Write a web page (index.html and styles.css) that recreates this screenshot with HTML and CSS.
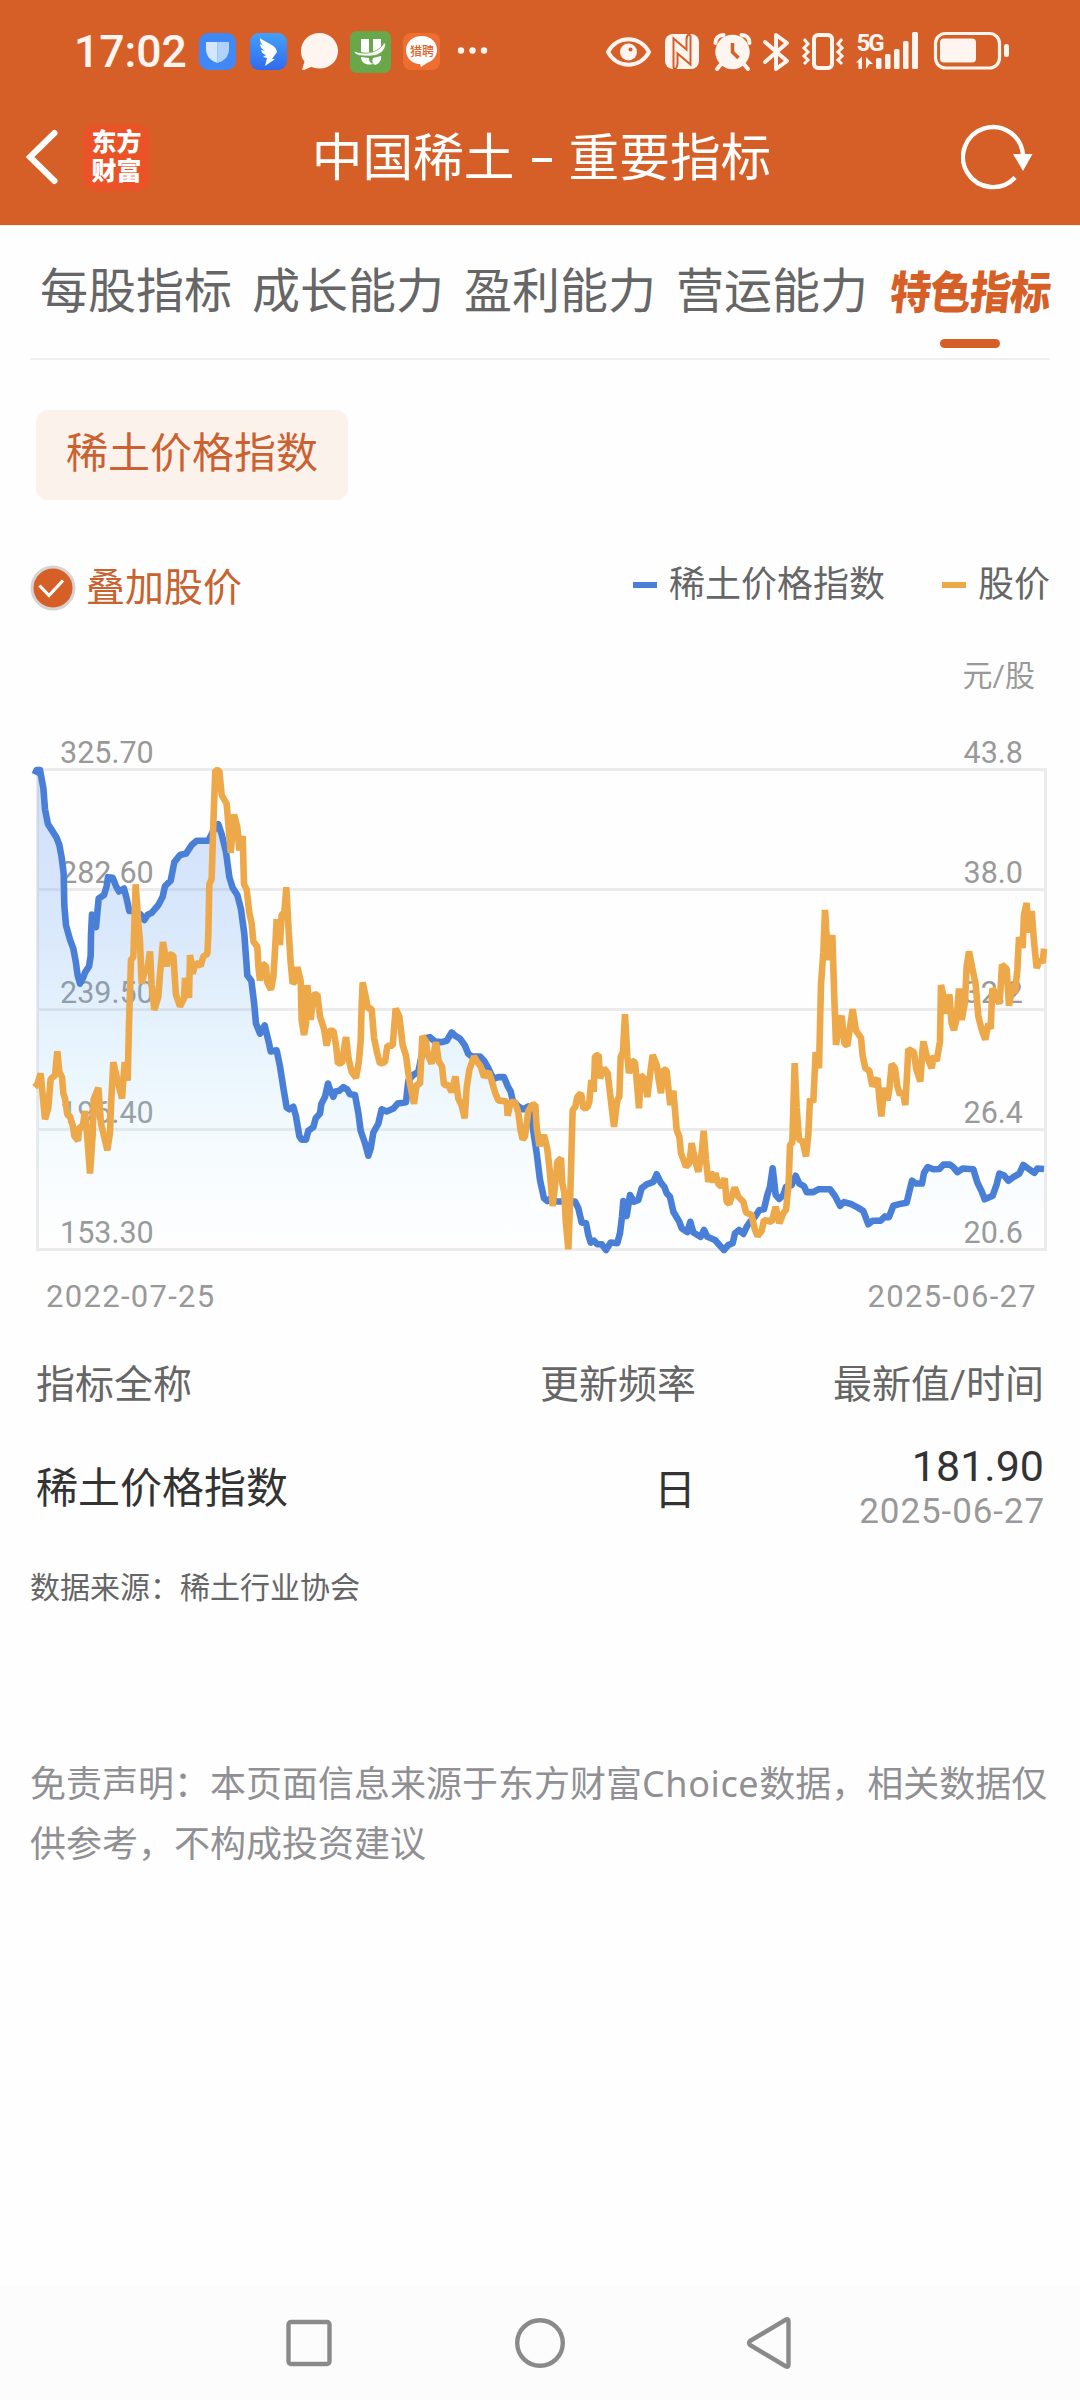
FILE: index.html
```html
<!DOCTYPE html>
<html lang="zh-CN">
<head>
    <meta charset="UTF-8">
    <meta name="viewport" content="width=device-width, initial-scale=1.0">
    <title>中国稀土 - 重要指标</title>
    <link rel="stylesheet" href="styles.css">
</head>
<body>
    <header class="header">
        <div class="status-bar">
            <span class="clock">17:02</span>
            <svg class="notifications" viewBox="199 30 290 44" width="290" height="44">
                <defs>
                    <linearGradient id="wingBg" x1="0" y1="0" x2="0" y2="1">
                        <stop offset="0" stop-color="#45a0f8"/>
                        <stop offset="1" stop-color="#2f6af0"/>
                    </linearGradient>
                </defs>
                <!-- shield -->
                <rect x="199" y="33" width="37" height="37" rx="9" fill="#3f88f5"/>
                <path d="M206 42h11.500v21c-7-2-11.500-7-11.500-14z" fill="#d3e6ff"/>
                <path d="M217.500 42H229v7c0 7-4.500 12-11.500 14z" fill="#b0d2fd"/>
                <!-- wing -->
                <rect x="250" y="33" width="37" height="37" rx="9" fill="url(#wingBg)"/>
                <path d="M260 38c5 4 13 6 16 11l1 3-5 7h3l-10 7 2-8-4-1 3-2c-3-1-4-2-5-5l4 1c-3-2-5-4-5-7l4 2c-3-2-4-4-4-8z" fill="#fff"/>
                <!-- bubble -->
                <path d="M319.500 33c10.500 0 18.500 8 18.500 18s-8 17.500-18.500 17.500c-3.500 0-6-.7-8-1.700L304 70c-1.500.4-2-.5-1.500-2l2-6.500c-2.500-3-3.500-6.500-3.500-10.500 0-10 8-18 18.500-18z" fill="#fef5f0"/>
                <!-- green app -->
                <rect x="350" y="31" width="41" height="42" rx="7" fill="#69a84a"/>
                <path d="M361 39h8v13h4V39h8v12c-6 3-14 3.500-20 1z" fill="#fff"/>
                <path d="M354 51c9 4 24 3 30-8 .5 0 1.500 0 1.500 2-1 8-9 11-16 11-7 0-15 0-15.500-5z" fill="#fff" stroke="#69a84a" stroke-width=".8"/>
                <path d="M361 57l8 1c0 3 1 5 4 6-6 2-12-1-12-7zM373 58l8-2c1 4-2 8-6 9-3-2-3-4-2-7z" fill="#fff"/>
                <!-- recruiting app -->
                <rect x="403" y="33" width="37" height="37" rx="8" fill="#ef6d30"/>
                <path d="M421.500 36c9 0 15.500 6 15.500 14 0 6-4 11-10 13l-6 4-1-3c-8 0-14-6-14-14s7-14 15.500-14z" fill="#fff"/>
                <text class="mini-label" x="410" y="55.500">猎聘</text>
                <circle cx="461" cy="50.500" r="3.200" fill="#fef5f0"/>
                <circle cx="472.500" cy="50.500" r="3.200" fill="#fef5f0"/>
                <circle cx="484" cy="50.500" r="3.200" fill="#fef5f0"/>
            </svg>
            <svg class="system" viewBox="604 30 408 44" width="408" height="44" fill="#fef5f0">
                <!-- eye -->
                <path d="M608 52c9-17 32-17 41 0-9 17-32 17-41 0z" fill="none" stroke="#fef5f0" stroke-width="4" stroke-linejoin="round"/>
                <circle cx="628.500" cy="52" r="8.500"/>
                <circle cx="630.500" cy="49.500" r="2" fill="#d65f28"/>
                <!-- nfc -->
                <rect x="665" y="34" width="34" height="35" rx="8"/>
                <path d="M675 70l-1.500-3V38.500l13 11V39c0-3 1-4 3-6M688 33l2.500 3v28.500l-13-11V64c0 3-1 4-3 6" fill="none" stroke="#d65f28" stroke-width="2"/>
                <!-- alarm -->
                <circle cx="732.500" cy="52" r="17.200"/>
                <path d="M715.500 43c0-5 3-8 8-8M749.500 43c0-5-3-8-8-8M717 69l5-6M748 69l-5-6" fill="none" stroke="#fef5f0" stroke-width="4" stroke-linecap="round"/>
                <path d="M732.500 43v9l6 6" fill="none" stroke="#d65f28" stroke-width="3.500"/>
                <!-- bluetooth -->
                <path d="M765 42l22 19-11 8V35l11 8-22 19" fill="none" stroke="#fef5f0" stroke-width="4" stroke-linejoin="round" stroke-linecap="round"/>
                <!-- vibrate -->
                <rect x="814" y="35" width="18" height="33" rx="4" fill="none" stroke="#fef5f0" stroke-width="4"/>
                <path d="M804 39l4 5-4 4 4 4-4 4 4 4-4 4M842 39l-4 5 4 4-4 4 4 4-4 4 4 4" fill="none" stroke="#fef5f0" stroke-width="3"/>
                <!-- signal -->
                <text class="net" x="856.500" y="50.500">5G</text>
                <path d="M856 62.500l6-6V69h-3.500v-6.500zM866 57l7 7h-3.500l-3.500 5z"/>
                <rect x="876" y="58" width="5.500" height="11" rx="1.500"/>
                <rect x="885" y="54" width="5.500" height="15" rx="1.500"/>
                <rect x="894" y="49" width="5.500" height="20" rx="1.500"/>
                <rect x="903" y="41" width="5.500" height="28" rx="1.500"/>
                <rect x="912" y="32" width="6" height="37" rx="1.500"/>
                <!-- battery -->
                <rect x="935.500" y="33.500" width="64" height="34.500" rx="10" fill="none" stroke="#fef5f0" stroke-width="3.200"/>
                <rect x="940" y="38.500" width="36" height="24" rx="4"/>
                <rect x="1004" y="44" width="5" height="13" rx="2.500"/>
            </svg>
        </div>
        <div class="title-bar">
            <svg class="back" viewBox="0 0 34 60" width="34" height="60">
                <path d="M29.500 6L5 30l24.500 24" fill="none" stroke="#fff" stroke-width="6" stroke-linecap="round"/>
            </svg>
            <div class="logo"><span>东方</span><span>财富</span></div>
            <h1>中国稀土<i class="dash"></i>重要指标</h1>
            <svg class="refresh" viewBox="0 0 72 66" width="72" height="66">
                <path d="M54 53.500A30 30 0 1 1 62 32" fill="none" stroke="#fff" stroke-width="4.400"/>
                <path d="M52 30h19.500L62 47z" fill="#fff"/>
            </svg>
        </div>
    </header>

    <nav class="tabs">
        <a>每股指标</a>
        <a>成长能力</a>
        <a>盈利能力</a>
        <a>营运能力</a>
        <a class="active"><b>特色指标</b></a>
    </nav>

    <main>
        <div class="chip">稀土价格指数</div>

        <div class="chart-head">
            <div class="overlay">
                <svg viewBox="0 0 46 46" width="46" height="46">
                    <circle cx="23" cy="23" r="21" fill="#d65f28" stroke="#d8d2d4" stroke-width="3"/>
                    <path d="M9.500 20.500l9.500 10 14-15" fill="none" stroke="#fff" stroke-width="3.200"/>
                </svg>
                叠加股价
            </div>
            <div class="legend">
                <span class="index">稀土价格指数</span>
                <span class="price">股价</span>
            </div>
        </div>
        <div class="unit">元/股</div>

        <svg class="chart" viewBox="20 720 1050 560" width="1050" height="560">
            <defs>
                <linearGradient id="fill" gradientUnits="userSpaceOnUse" x1="0" y1="138" x2="0" y2="1482">
                    <stop offset="0" stop-color="#4a86f5" stop-opacity=".26"/>
                    <stop offset=".35" stop-color="#5b9df0" stop-opacity=".22"/>
                    <stop offset=".65" stop-color="#8cd0f8" stop-opacity=".16"/>
                    <stop offset="1" stop-color="#bfeeff" stop-opacity="0"/>
                </linearGradient>
            </defs>
            <path class="grid" d="M37.500 769.500H1045.500V1249.500H37.500zM37.500 889.500H1045.500M37.500 1009.500H1045.500M37.500 1129.500H1045.500"/>
            <g class="axis">
                <text x="60" y="762.500">325.70</text>
                <text x="60" y="882.500">282.60</text>
                <text x="60" y="1002.500">239.50</text>
                <text x="60" y="1122.500">196.40</text>
                <text x="60" y="1242.500">153.30</text>
            </g>
            <g class="axis right">
                <text x="1023" y="762.500">43.8</text>
                <text x="1023" y="882.500">38.0</text>
                <text x="1023" y="1002.500">32.2</text>
                <text x="1023" y="1122.500">26.4</text>
                <text x="1023" y="1242.500">20.6</text>
            </g>
            <svg id="series" x="20" y="720" width="1050" height="560" viewBox="0 0 3150 1568" preserveAspectRatio="none"></svg>
        </svg>
        <div class="range"><span>2022-07-25</span><span>2025-06-27</span></div>

        <div class="table">
            <div class="row head">
                <span>指标全称</span>
                <span>更新频率</span>
                <span>最新值/时间</span>
            </div>
            <div class="row">
                <span>稀土价格指数</span>
                <span class="freq">日</span>
                <span class="latest"><em>181.90</em><small>2025-06-27</small></span>
            </div>
        </div>

        <p class="source">数据来源：稀土行业协会</p>
        <p class="disclaimer">免责声明：本页面信息来源于东方财富<span>Choice</span>数据，相关数据仅供参考，不构成投资建议</p>
    </main>

    <footer class="nav-bar">
        <svg viewBox="0 0 50 54" width="50" height="54"><rect x="4.500" y="6" width="41" height="42" rx="2.500"/></svg>
        <svg viewBox="0 0 50 54" width="50" height="54"><circle cx="25" cy="27" r="22.800"/></svg>
        <svg viewBox="0 0 50 54" width="50" height="54"><path d="M4 25L40 3.500q2.500-1 2.500 1.500V49q0 2.500-2.500 1.500L4 29q-2-2 0-4z"/></svg>
    </footer>

    <script src="chart.js"></script>
</body>
</html>
```
FILE: styles.css
```css
body {
    margin: 0;
    height: 2400px;
    display: flex;
    flex-direction: column;
    background-color: #fefefe;
    color: #666;
    font-family: Roboto, "Noto Sans CJK SC", sans-serif;
    overflow: hidden;
}

.header {
    height: 225px;
    background-color: #d65f28;
    border-bottom: 1px solid #fdeee0;
    color: #fff;
}

.status-bar {
    height: 104px;
    box-sizing: border-box;
    padding: 30px 68px 0 74px;
    display: flex;
    align-items: flex-start;
}

.clock {
    width: 125px;
    font-size: 44.5px;
    line-height: 44px;
    font-weight: 500;
    color: #fef5f0;
}

.system {
    margin-left: auto;
}

.mini-label {
    font-size: 12px;
    font-weight: 500;
    fill: #e0622a;
}

.net {
    font-size: 24px;
    font-weight: 700;
    letter-spacing: -2px;
}

.title-bar {
    height: 106px;
    padding: 0 47px 0 25px;
    display: grid;
    grid-template-columns: 58px 67px 1fr 67px 72px;
    align-items: center;
}

.logo {
    width: 67px;
    height: 67px;
    border-radius: 14px;
    background-color: #ea5228;
    display: flex;
    flex-direction: column;
    align-items: center;
    justify-content: center;
    font-size: 25px;
    line-height: 29px;
    font-weight: 900;
}

.title-bar h1 {
    margin: 0;
    padding: 3px 0 0 39px;
    font-size: 50.7px;
    line-height: 70px;
    font-weight: 400;
    white-space: nowrap;
    display: flex;
    align-items: center;
    justify-content: center;
}

.dash {
    width: 20px;
    height: 4px;
    margin: 3px 17px 0;
    background-color: #fff;
}

.refresh {
    grid-column: 5;
}

.tabs {
    height: 132px;
    margin: 0 30px;
    padding-left: 10px;
    border-bottom: 2px solid #f0f0f0;
    display: flex;
    gap: 20px;
    font-size: 48px;
    line-height: 132px;
    white-space: nowrap;
}

.tabs .active {
    position: relative;
    width: 160px;
    color: #d65f28;
    font-size: 41px;
    line-height: 136px;
}

.tabs .active b {
    display: inline-block;
    font-weight: 900;
    letter-spacing: -1px;
    transform: translateX(2px) skewX(-6deg) scaleY(1.1);
}

.tabs .active::after {
    content: "";
    position: absolute;
    left: 52px;
    top: 113px;
    width: 60px;
    height: 9px;
    border-radius: 5px;
    background-color: #d65f28;
}

main {
    flex: 1;
    padding: 50px 30px 0;
}

.chip {
    width: 312px;
    height: 90px;
    margin-left: 6px;
    border-radius: 12px;
    background-color: #fbf2ec;
    color: #cb6130;
    font-size: 42px;
    line-height: 87px;
    text-align: center;
}

.chart-head {
    margin-top: 55px;
    height: 66px;
    display: flex;
    align-items: center;
    justify-content: space-between;
}

.overlay {
    display: flex;
    align-items: center;
    gap: 10px;
    color: #c8622f;
    font-size: 39px;
    line-height: 60px;
}

.legend {
    display: flex;
    gap: 57px;
    margin-top: -6px;
    font-size: 36px;
    line-height: 60px;
}

.legend span {
    display: flex;
    align-items: center;
    gap: 12px;
}

.legend span::before {
    content: "";
    width: 24px;
    height: 6px;
    background-color: #4a7fd8;
}

.legend .price::before {
    background-color: #eda849;
}

.unit {
    margin-top: 33px;
    padding-right: 15px;
    height: 66px;
    color: #999;
    font-size: 30px;
    line-height: 44px;
    text-align: right;
}

.chart {
    display: block;
    margin-left: -10px;
}

.grid {
    fill: none;
    stroke: #ebebeb;
    stroke-width: 3;
}

.axis {
    fill: #999;
    font-size: 30.5px;
}

.right {
    text-anchor: end;
}

#series path {
    fill: none;
    stroke-width: 6.6;
    stroke-linejoin: bevel;
    vector-effect: non-scaling-stroke;
}

#series .area {
    fill: url(#fill);
}

#series .index {
    stroke: #4a7fd8;
    stroke-linejoin: round;
}

#series .price {
    stroke: #eda849;
}

.range {
    height: 34px;
    padding: 0 13px 0 16px;
    display: flex;
    justify-content: space-between;
    color: #999;
    font-size: 31px;
    line-height: 34px;
    letter-spacing: 1.3px;
}

.table {
    padding: 41px 6px 0 6px;
}

.row {
    display: grid;
    grid-template-columns: 300px 1fr 348px;
    align-items: center;
    color: #333;
    font-size: 42px;
    line-height: 60px;
    height: 148px;
}

.row.head {
    height: 60px;
    color: #666;
    font-size: 39px;
}

.row span + span {
    text-align: right;
}

.row .freq {
    padding-top: 4px;
}

.latest em,
.latest small {
    display: block;
    font-style: normal;
    line-height: 45px;
}

.latest em {
    font-size: 43px;
}

.latest small {
    color: #999;
    font-size: 35px;
    letter-spacing: .9px;
    margin-right: -1px;
}

.source {
    margin: 3px 0 0;
    font-size: 30px;
    line-height: 44px;
}

.disclaimer {
    margin: 144px -4px 0 0;
    color: #909094;
    font-family: "Noto Sans", "Noto Sans CJK SC", sans-serif;
    font-size: 36px;
    line-height: 60px;
}

.disclaimer span {
    letter-spacing: .6px;
}

.nav-bar {
    height: 114px;
    display: flex;
    justify-content: center;
    align-items: center;
    gap: 181px;
    background-color: #fcfcfc;
}

.nav-bar svg {
    fill: none;
    stroke: #8a8a8a;
    stroke-width: 4.4;
}
```
FILE: chart.js
```js
const indexLine = `44,152 50,140 60,140 70,190 75,250 84,292 98,312 110,330 118,350 125,385 131,430 133,520 138,575
150,615 160,640 167,675 173,715 180,738 190,720 196,705 207,690 212,660 213,600 216,545 228,580 236,500 252,490
260,465 264,440 278,442 288,465 297,480 312,472 320,500 328,535 345,535 362,545 373,560 383,545 395,540 415,518
428,495 435,465 452,450 463,398 480,378 498,374 515,350 530,338 565,338 580,310 595,292 605,320 618,370 628,440
638,470 652,490 663,530 673,600 682,715 694,730 702,790 708,850 720,878 734,855 747,905 752,928 770,925 780,970
790,1030 800,1085 808,1090 820,1083 828,1110 838,1165 845,1175 858,1175 865,1150 880,1140 887,1115 900,1102
904,1075 915,1055 924,1018 932,1040 940,1055 946,1040 958,1038 970,1028 982,1035 990,1048 1005,1050 1015,1100
1022,1150 1035,1185 1045,1220 1052,1200 1060,1155 1075,1130 1085,1090 1100,1096 1120,1088 1133,1074 1158,1070
1165,1010 1178,995 1195,985 1205,940 1220,890 1230,888 1245,900 1265,902 1280,898 1295,875 1305,884 1320,892
1335,912 1345,935 1355,942 1380,942 1393,955 1405,975 1420,1005 1435,1000 1452,1000 1463,1025 1472,1040
1478,1065 1495,1082 1510,1090 1525,1082 1538,1139 1550,1213 1560,1288 1572,1339 1582,1347 1592,1339 1610,1348
1630,1348 1665,1348 1675,1367 1685,1407 1698,1409 1705,1442 1712,1463 1722,1458 1732,1468 1745,1468 1758,1484
1772,1463 1792,1465 1800,1437 1806,1391 1810,1347 1820,1389 1830,1330 1842,1349 1855,1344 1865,1311 1880,1300
1900,1293 1910,1272 1922,1295 1933,1307 1940,1325 1950,1335 1960,1377 1978,1405 1985,1423 2002,1434 2011,1405
2020,1435 2042,1447 2052,1428 2062,1447 2085,1456 2098,1470 2112,1484 2125,1470 2138,1465 2145,1437 2157,1428
2170,1439 2180,1419 2190,1405 2205,1391 2218,1372 2232,1370 2242,1330 2250,1307 2258,1255 2267,1330 2278,1341
2290,1330 2298,1307 2315,1302 2327,1276 2338,1298 2352,1305 2360,1322 2380,1322 2395,1314 2430,1314 2445,1333
2460,1360 2472,1350 2495,1356 2515,1366 2530,1375 2545,1412 2558,1402 2582,1402 2595,1390 2607,1392 2620,1360
2640,1355 2660,1352 2668,1320 2676,1290 2688,1298 2706,1298 2712,1268 2723,1252 2740,1258 2758,1257 2770,1245
2790,1245 2800,1252 2812,1266 2828,1256 2860,1258 2872,1295 2885,1320 2894,1342 2918,1332 2930,1300 2938,1270
2952,1275 2965,1290 2980,1280 2998,1270 3010,1246 3025,1256 3043,1268 3052,1256 3072,1257`;

const priceLine = `44,1028 52,1020 62,990 68,1050 75,1118 85,1085 92,1005 105,995 112,928 118,985 126,1000 130,1045
135,1060 142,1105 150,1110 158,1135 163,1165 174,1178 178,1140 188,1140 195,1095 202,1170 210,1270 218,1160
221,1062 235,1030 243,1130 252,1165 262,1205 270,1155 274,1060 280,958 290,1000 306,1060 314,958 323,1010
327,850 333,670 340,665 347,460 355,570 360,620 365,738 378,690 380,710 390,648 395,740 403,812 415,775 420,712
429,622 436,660 440,690 448,655 460,660 468,770 480,802 492,780 495,722 507,778 510,658 518,710 527,680 542,688
550,662 562,655 565,600 568,460 575,445 580,290 586,140 598,142 605,210 620,235 625,290 632,372 642,265 652,300
658,365 668,325 672,460 680,475 688,540 695,570 700,620 712,635 715,690 720,730 727,682 738,690 742,735 753,755
760,720 765,645 770,558 780,630 785,545 793,540 799,468 806,590 812,680 818,738 826,730 832,692 842,730 845,840
852,882 858,850 862,742 872,840 880,770 892,768 900,830 912,865 920,912 928,870 940,870 948,910 954,962 966,960
972,920 978,888 986,950 995,985 1008,1002 1016,960 1022,900 1025,800 1028,735 1036,770 1044,808 1055,808
1062,890 1072,935 1080,962 1095,958 1102,912 1118,912 1127,808 1138,830 1148,910 1158,940 1168,1010 1182,1075
1190,1020 1200,1020 1207,885 1218,900 1222,935 1235,962 1248,902 1256,955 1266,970 1272,1022 1285,1022
1295,1042 1306,998 1315,1060 1325,1080 1334,1115 1340,1030 1348,980 1362,942 1370,955 1382,970 1392,1000
1406,985 1415,1010 1426,1045 1435,1065 1460,1068 1463,1108 1472,1070 1485,1070 1495,1100 1502,1150 1508,1175
1515,1165 1525,1095 1535,1078 1546,1077 1550,1139 1558,1193 1572,1162 1582,1202 1588,1251 1598,1361 1606,1297
1612,1237 1623,1227 1627,1297 1633,1325 1637,1400 1645,1482 1651,1325 1658,1092 1666,1083 1672,1055 1683,1045
1690,1087 1702,1085 1708,1069 1714,1008 1721,1041 1725,941 1736,938 1740,1003 1752,975 1763,989 1770,1045
1782,1139 1792,1064 1798,1055 1802,943 1809,929 1815,824 1822,943 1827,989 1835,954 1845,959 1850,1008
1857,1087 1862,994 1875,1008 1882,1056 1888,1008 1898,938 1910,966 1916,1008 1923,1045 1930,978 1940,982
1945,1031 1951,1078 1960,1038 1970,1148 1978,1167 1983,1213 1998,1251 2008,1241 2015,1185 2025,1232 2035,1265
2045,1213 2051,1150 2058,1232 2065,1293 2073,1265 2080,1295 2086,1269 2095,1299 2105,1307 2114,1283 2120,1349
2128,1355 2135,1335 2144,1309 2155,1335 2170,1349 2178,1379 2195,1386 2205,1428 2213,1445 2225,1430 2232,1400
2255,1405 2267,1363 2278,1409 2290,1381 2298,1372 2306,1297 2310,1190 2317,1183 2324,961 2330,1085 2337,1175
2348,1180 2358,1222 2365,1160 2370,1060 2380,1070 2387,930 2397,975 2403,740 2410,650 2415,532 2424,672
2437,602 2443,780 2448,910 2457,850 2465,828 2473,905 2482,912 2490,860 2498,810 2508,870 2523,890 2528,940
2536,975 2548,982 2557,1025 2573,1003 2578,1060 2584,1110 2593,1030 2602,1065 2608,1035 2615,963 2625,975
2632,1025 2640,1050 2648,1040 2656,1078 2660,1010 2665,922 2682,930 2688,975 2701,1012 2706,940 2710,900
2720,940 2735,975 2742,940 2750,955 2760,900 2763,742 2772,780 2778,822 2788,768 2795,850 2802,868 2810,835
2817,752 2825,840 2835,790 2840,690 2847,648 2857,695 2867,740 2875,830 2886,870 2896,895 2905,850 2912,865
2917,752 2928,765 2938,795 2942,750 2946,685 2960,697 2967,800 2978,740 2985,765 2992,700 2997,608 3008,638
3012,545 3020,512 3025,595 3035,535 3042,620 3050,695 3060,670 3068,680 3072,640`;

function addPath(className, d) {
    const path = document.createElementNS("http://www.w3.org/2000/svg", "path");
    path.setAttribute("class", className);
    path.setAttribute("d", d);
    document.getElementById("series").appendChild(path);
}

addPath("area", "M52,1482 L52,140 L" + indexLine.replace("44,152 50,140 ", "") + " L3072,1482 Z");
addPath("index", "M" + indexLine);
addPath("price", "M" + priceLine);
```
